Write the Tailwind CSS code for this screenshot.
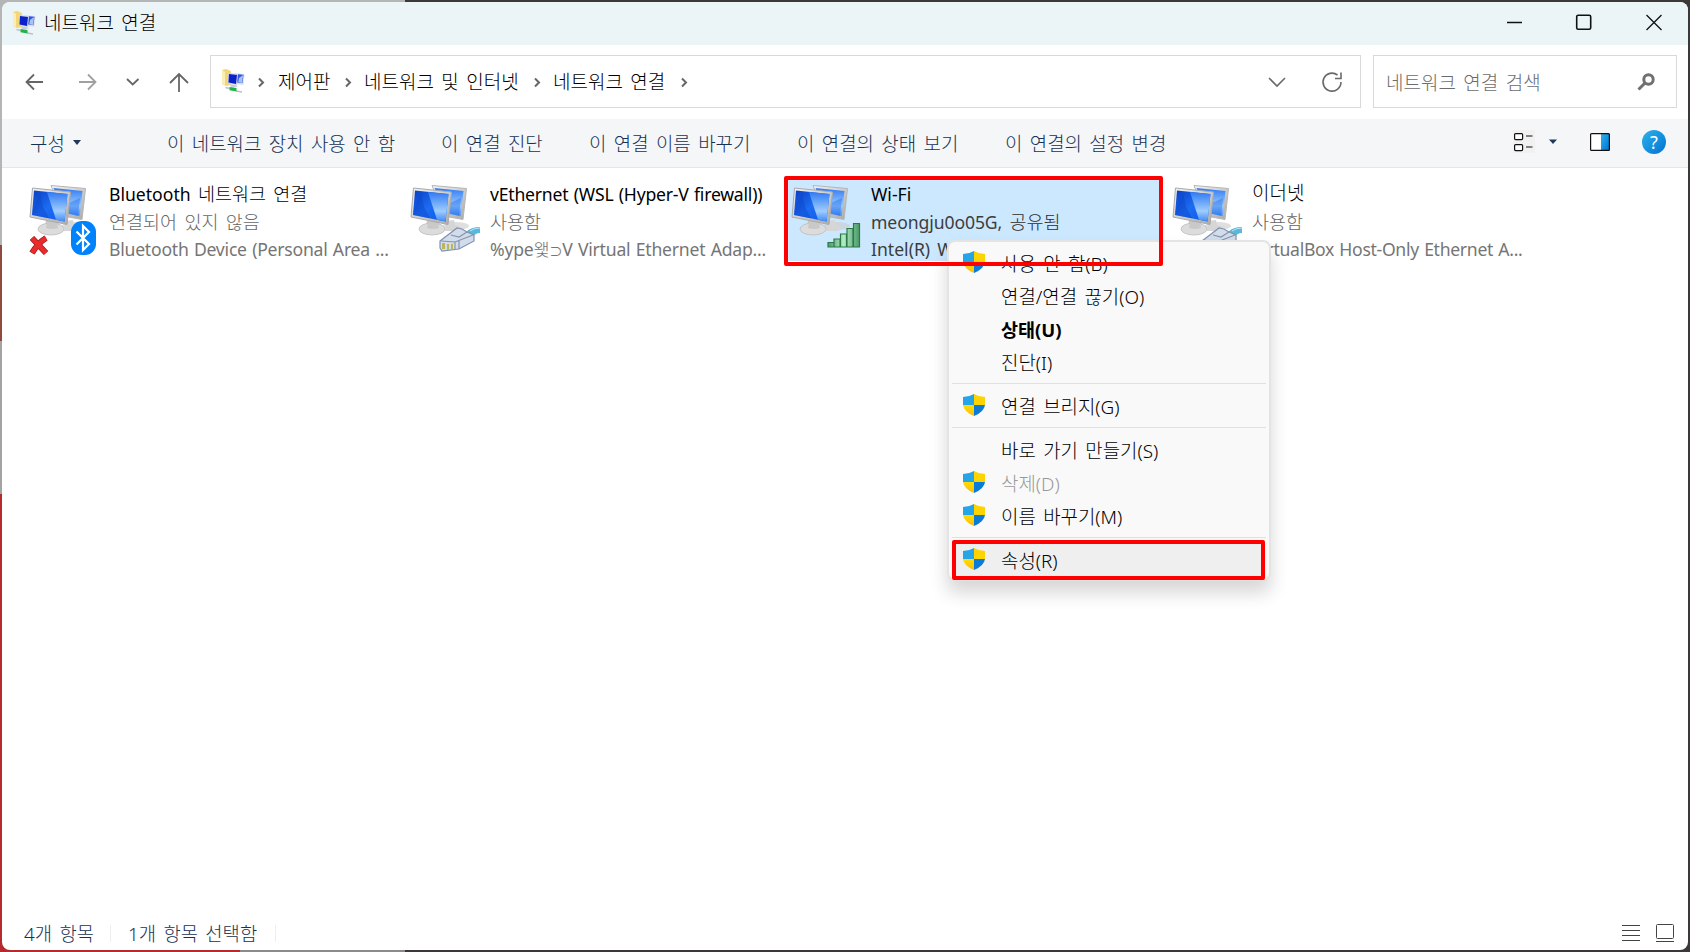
<!DOCTYPE html>
<html lang="ko">
<head>
<meta charset="utf-8">
<title>네트워크 연결</title>
<script src="https://cdn.jsdelivr.net/npm/@tailwindcss/browser@4"></script>
</head>
<body class="relative h-[952px] w-[1690px] overflow-hidden bg-[#3b3837] p-[2px] font-['Noto_Sans','Noto_Sans_CJK_KR',sans-serif] text-[18px] leading-[27px] font-light text-black [word-spacing:2.5px]">
<!-- desktop behind the window -->
<div class="absolute inset-y-0 left-0 flex w-[405px] flex-col">
  <div class="h-[245px] bg-[#b5b5b6]"></div><div class="h-24 bg-[#8f4a40]"></div><div class="h-[153px] bg-[#a3a3a3]"></div>
  <div class="flex flex-1"><div class="w-60 bg-[#b52a2d]"></div><div class="flex-1 bg-[#8c8a89]"></div></div>
</div>

<svg class="absolute size-0">
  <defs>
    <linearGradient id="scr" x1="0" y1="0" x2="1" y2="1"><stop offset="0" stop-color="#0a3fc4"/><stop offset=".5" stop-color="#1c6cf2"/><stop offset="1" stop-color="#0b57ec"/></linearGradient>
    <linearGradient id="glare" x1="0" y1="0" x2="0" y2="1"><stop offset="0" stop-color="#2f7bf5"/><stop offset=".65" stop-color="#9fccfd"/><stop offset="1" stop-color="#3f8af6"/></linearGradient>
    <linearGradient id="metal" x1="0" y1="0" x2="1" y2="1"><stop offset="0" stop-color="#f4f4f4"/><stop offset="1" stop-color="#a9a9a9"/></linearGradient>
    <linearGradient id="bar" x1="0" y1="0" x2="1" y2="0"><stop offset="0" stop-color="#4a9a68"/><stop offset=".5" stop-color="#b4eac4"/><stop offset="1" stop-color="#4a9a68"/></linearGradient>
    <linearGradient id="yel" x1="0" y1="0" x2="0" y2="1"><stop offset="0" stop-color="#ffdd00"/><stop offset="1" stop-color="#fdbb10"/></linearGradient>
    <linearGradient id="blu" x1="0" y1="0" x2="1" y2="1"><stop offset="0" stop-color="#2db3ec"/><stop offset="1" stop-color="#0072d2"/></linearGradient>
    <symbol id="pc" viewBox="0 0 66 72">
      <ellipse cx="46" cy="41" rx="13" ry="4" fill="#c9c9c9" opacity=".6"/>
      <path d="M36 36l8-1 1 5 6 2-4 4-12 0z" fill="#d6d6d6"/>
      <path d="M22 0.500L56.500 3.500 53 34.500 34 31z" fill="url(#metal)" stroke="#b5b5b5"/>
      <path d="M24.500 3L53.500 6 50.500 31 35 28z" fill="url(#glare)"/>
      <path d="M40 18l11-5-2 18-11-3z" fill="#1767ee" opacity=".4"/>
      <path d="M17 36h12l2 8H15z" fill="#c6c6c6"/>
      <ellipse cx="22" cy="44" rx="13" ry="6" fill="#dcdcdc" stroke="#bdbdbd" stroke-width=".8"/>
      <path d="M18 37h10l1 6q-6 2-12 0z" fill="#c9c9c9"/>
      <path d="M3.500 3L41.500 7 38 39.500 1 32z" fill="url(#metal)" stroke="#aaa"/>
      <path d="M5 5.500L38.500 9 35.500 36.500 3 30z" fill="url(#scr)"/>
      <path d="M18 7L38.500 9 35.500 36.500 27 34.700z" fill="url(#glare)"/>
      <path d="M3.800 24L11 8 14 22 20 33.200 3 30z" fill="#0a43c8" opacity=".4"/>
    </symbol>
    <symbol id="plug" viewBox="0 0 42 26">
      <path d="M27 6Q32 1 41 1v6q-5 0-8 5z" fill="#59b8dc"/><path d="M31 5q4-3 10-3" stroke="#b5e6f5" fill="none"/>
      <path d="M1 15L18 2l5 1 5 3 7 3v6L20 23 3 25 1 22z" fill="#d2dceb" stroke="#7f93b0" stroke-width="1.200"/>
      <path d="M2 15l14 1v8M16 16L34 9M12 9l8 2 8-5M20 15v8" fill="none" stroke="#8496ad" stroke-width="1.200"/>
      <path d="M3 17h3v6h-3zM8 18h2v6h-2zM12 18h2v5h-2z" fill="#bdb659"/>
    </symbol>
    <symbol id="net" viewBox="0 0 24 24">
      <path d="M1 1l4-1 5 2v14l-5 1-4-2z" fill="#f2d678"/><path d="M1 1l3 2v13l-3-1z" fill="#fbeeb5"/>
      <path d="M13 4l10.500 1-1 11-9-1z" fill="#dfe2ee"/><path d="M14.500 5l8 .7-1 8.500-7-1z" fill="#2f55e0"/><path d="M18 9l4-3-.8 8-4-.7z" fill="#a8c2fa"/>
      <path d="M7 4l10 1-1 11-9-2z" fill="#cdd4ea"/><path d="M8 5l8 1-1 9-7.500-1.500z" fill="#0a22c8"/><path d="M9 15l6 1 2 1.500-7 1z" fill="#c9d0d4"/>
      <path d="M4.500 18.500l4 1M15 22l6 1" stroke="#b5c3c9" stroke-width="1.500"/><path d="M8.500 18l7 1v3.500l-7-1.200z" fill="#22b14c"/>
    </symbol>
    <symbol id="shield" viewBox="0 0 22 22">
      <path d="M11 0v11H0V3Q6 3 11 0z" fill="#25a5e8"/><path d="M11 0v11h11V3Q16 3 11 0z" fill="#fdd400"/>
      <path d="M0 11h11v11Q1 18 0 11z" fill="url(#yel)"/><path d="M22 11H11v11q10-4 11-11z" fill="#0b7bd8"/>
    </symbol>
  </defs>
</svg>

<main class="relative flex h-[948px] w-[1686px] flex-col overflow-hidden rounded-lg bg-white">
  <header class="flex h-[43px] shrink-0 items-center bg-[#ebf5f8] pb-[2px] pl-[10px]">
    <svg class="size-6"><use href="#net"/></svg>
    <h1 class="ml-[8px] pt-px text-[19px] leading-[27px] font-light">네트워크 연결</h1>
    <svg class="ml-auto mr-[25px] h-[17px] w-[158px]" viewBox="0 0 158 17" fill="none" stroke="#111" stroke-width="1.300">
      <path d="M2 8.500h15"/><rect x="71.700" y="1.200" width="14" height="14" rx="1.500" stroke-width="1.600"/><path d="M141.500 1l15 15M156.500 1l-15 15"/>
    </svg>
  </header>

  <nav class="flex h-[74px] shrink-0 items-center pb-[1px]">
    <svg class="h-6 w-[208px]" viewBox="0 0 208 24" fill="none" stroke="#666" stroke-width="1.800">
      <path d="M41 12H25M32 4.500L24.500 12l7.500 7.500"/><path stroke="#a0a0a0" d="M77 12h16M86 4.500l7.500 7.500-7.500 7.500"/><path d="M125 9l5.700 5.500L136.500 9"/><path d="M177 22V4.500M168 13l9-9 9 9"/>
    </svg>
    <div class="flex h-[53px] w-[1151px] items-center border border-[#d9d9d9] pl-[10px] text-[19px]">
      <svg class="mb-[2px] size-6"><use href="#net"/></svg>
      <svg class="ml-[13px] h-3 w-[7px]" fill="none" stroke="#666" stroke-width="2"><path d="M1 2.500l4 4-4 4"/></svg>
      <span class="ml-[13px] w-[67px] pt-px whitespace-nowrap">제어판</span>
      <svg class="h-3 w-[7px]" fill="none" stroke="#666" stroke-width="2"><path d="M1 2.500l4 4-4 4"/></svg>
      <span class="ml-[12px] w-[170px] pt-px whitespace-nowrap">네트워크 및 인터넷</span>
      <svg class="h-3 w-[7px]" fill="none" stroke="#666" stroke-width="2"><path d="M1 2.500l4 4-4 4"/></svg>
      <span class="ml-[12px] w-[128px] pt-px whitespace-nowrap">네트워크 연결</span>
      <svg class="h-3 w-[7px]" fill="none" stroke="#666" stroke-width="2"><path d="M1 2.500l4 4-4 4"/></svg>
      <svg class="ml-auto mr-[17px] h-6 w-[75px]" viewBox="0 0 75 24" fill="none" stroke="#6a6a6a" stroke-width="1.600"><path d="M1 8l8 8 8-8"/><path d="M73 12a9 9 0 1 1-3.500-7M73 2.500v6h-6"/></svg>
    </div>
    <div class="ml-[12px] flex h-[53px] w-[304px] items-center border border-[#d9d9d9] pl-[12px] text-[19px] text-[#6c6c6c]">
      <span class="pt-[3px]">네트워크 연결 검색</span>
      <svg class="ml-auto mr-[21px] h-[18px] w-[18px]" fill="none" stroke="#707070" stroke-width="3"><circle cx="11.500" cy="6.500" r="4.700"/><path d="M8 10l-6.500 6.500"/></svg>
    </div>
  </nav>

  <div class="relative flex h-[49px] shrink-0 items-center border-b border-[#e5e6e8] bg-[#f4f6f8] pl-7 text-[18.900px] text-[#173153] *:[span]:pt-[2px]">
    <span class="w-[43px]">구성</span><i class="mb-px h-0 w-0 border-x-4 border-t-[5px] border-x-transparent border-t-[#1e395b]"></i>
    <span class="ml-[86px] w-[274px] whitespace-nowrap">이 네트워크 장치 사용 안 함</span>
    <span class="w-[148px] whitespace-nowrap">이 연결 진단</span>
    <span class="w-[208px] whitespace-nowrap">이 연결 이름 바꾸기</span>
    <span class="w-[208px] whitespace-nowrap">이 연결의 상태 보기</span>
    <span class="whitespace-nowrap">이 연결의 설정 변경</span>
    <svg class="mb-[2px] ml-auto mr-[22px] h-6 w-[153px]" viewBox="0 0 153 24" fill="none">
      <rect x="0" y="0" width="22" height="23" fill="#f1f1f1"/>
      <g stroke="#111" stroke-width="1.200"><rect x="1.600" y="3.600" width="8" height="6" rx="1" fill="#fff"/><rect x="1.600" y="14.600" width="8" height="6" rx="1" fill="#fff"/><path d="M13 6h6.500M13 17h6.500"/></g>
      <path d="M36 9.500h8l-4 4.500z" fill="#1e395b"/>
      <rect x="77.500" y="3.500" width="19" height="17" fill="#fff"/><rect x="88" y="3.500" width="8.500" height="17" fill="url(#blu)"/><rect x="77.600" y="3.600" width="18.800" height="16.800" rx="1" stroke="#111" stroke-width="1.200"/>
      <circle cx="141" cy="12" r="12" fill="url(#blu)"/><text x="141" y="18.500" text-anchor="middle" fill="#fff" font-size="18" class="font-normal">?</text>
    </svg>
  </div>

  <section class="relative grid grow grid-cols-[repeat(4,381px)] content-start pt-[9px] text-[18.500px] leading-[27.500px] text-[#666]">
    <article class="flex h-[90px] pl-[27px] pt-[7px]">
      <div class="relative h-[76px] w-[80px] shrink-0"><svg class="mt-px h-[72px] w-[66px]"><use href="#pc"/></svg>
        <svg class="absolute -left-px top-[50px] h-[22px] w-[22px]" viewBox="0 0 22 22"><path d="M4 4l14 15M18 4Q10 9 4 19" stroke="#9c1a1a" stroke-width="6" fill="none"/><path d="M4 4l14 15M18 4Q10 9 4 19" stroke="#ea2b2b" stroke-width="4.500" fill="none"/></svg>
        <svg class="absolute left-[42px] top-[37px] h-[34px] w-[25px]" viewBox="0 0 25 34"><rect width="25" height="34" rx="11" fill="#0082fc"/><path d="M5.500 10.500L18 23l-6 6V5l6 6L5.500 23.500" fill="none" stroke="#fff" stroke-width="2.200"/></svg>
      </div>
      <div class="-mt-[4px] whitespace-nowrap"><p class="text-black"><span class="text-[17.600px] font-normal">Bluetooth</span> 네트워크 연결</p><p class="-mt-px mb-px">연결되어 있지 않음</p><p class="text-[17.600px] font-normal tracking-[-0.230px] text-[#757575] [word-spacing:1px]">Bluetooth Device (Personal Area ...</p></div>
    </article>
    <article class="flex h-[90px] pl-[27px] pt-[7px]">
      <div class="relative h-[76px] w-[80px] shrink-0"><svg class="mt-px h-[72px] w-[66px]"><use href="#pc"/></svg><svg class="absolute left-[29px] top-[42px] h-[26px] w-[42px]"><use href="#plug"/></svg></div>
      <div class="-mt-[3px] whitespace-nowrap"><p class="text-[17.600px] font-normal tracking-[-0.210px] text-black [word-spacing:1px]">vEthernet (WSL (Hyper-V firewall))</p><p class="-mt-px mb-px">사용함</p><p class="text-[17.600px] font-normal tracking-[-0.220px] text-[#757575] [word-spacing:1px]">%ype<span class="font-light">왳</span><span class="text-[13px]">⊃</span>V Virtual Ethernet Adap...</p></div>
    </article>
    <article class="ml-[22px] flex h-[84px] w-[373px] bg-[#cce8ff] pl-[5px] pt-[7px] text-[#2c2c2c]">
      <div class="relative h-[76px] w-[80px] shrink-0"><svg class="mt-px h-[72px] w-[66px]"><use href="#pc"/></svg>
        <svg class="absolute left-[36px] top-[38px] h-[26px] w-[34px]" viewBox="0 0 34 26" fill="url(#bar)" stroke="#2a7a48" stroke-width="1.200"><path d="M1 20.500h6V25H1zM7 17h6v8H7zM13.500 12h6v13h-6zM20 6.500h6V25h-6zM26.500 1.500h6V25h-6z"/></svg></div>
      <div class="-mt-[3px] whitespace-nowrap"><p class="text-[17.600px] font-normal text-black">Wi-Fi</p><p class="-mt-px"><span class="text-[17.600px] font-normal tracking-[-0.100px] text-[#3c3c3c]">meongju0o05G,</span> 공유됨</p><p class="text-[17.600px] font-normal text-[#3c3c3c]">Intel(R) Wi-Fi</p></div>
    </article>
    <article class="flex h-[90px] pl-[27px] pt-[7px]">
      <div class="relative h-[76px] w-[80px] shrink-0"><svg class="mt-px h-[72px] w-[66px]"><use href="#pc"/></svg><svg class="absolute left-[29px] top-[42px] h-[26px] w-[42px]"><use href="#plug"/></svg></div>
      <div class="-mt-[4px] whitespace-nowrap"><p class="text-[19px] text-black">이더넷</p><p class="mb-px">사용함</p><p class="text-[17.600px] font-normal tracking-[-0.300px] text-[#757575] [word-spacing:1px]">VirtualBox Host-Only Ethernet A...</p></div>
    </article>
  </section>

  <footer class="flex h-[34px] shrink-0 items-center pl-[22px] text-[18.800px] text-[#173153]">
    <span class="w-[86px] pt-[2px]">4개 항목</span><i class="h-[17px] w-px bg-[#eee]"></i><span class="ml-[17px] w-[147px] pt-[2px] whitespace-nowrap">1개 항목 선택함</span><i class="h-[17px] w-px bg-[#eee]"></i>
    <svg class="ml-auto mr-[13px] mb-px h-[19px] w-[53px]" viewBox="0 0 53 19" fill="none" stroke="#444" stroke-width="1"><path d="M0 2.500h18M0 7.500h18M0 12.500h18M0 17.500h18"/><rect x="34.500" y="1.500" width="17" height="14" rx="1"/><path d="M34 18.500h18"/></svg>
  </footer>
</main>

<!-- context menu -->
<div class="absolute left-[947px] top-[240px] flex h-[341px] w-[324px] flex-col rounded-lg border-2 border-[#e4e4e4] bg-[#f9f9f9] px-[3px] pt-[6px] text-[18.900px] leading-[33px] text-black shadow-[0_12px_18px_rgba(0,0,0,0.16)] *:shrink-0">
  <div class="flex h-[33px] pl-[11px]"><svg class="mr-[16px] mt-[3px] size-[22px]"><use href="#shield"/></svg>사용 안 함(B)</div>
  <div class="h-[33px] pl-[49px]">연결/연결 끊기(O)</div>
  <div class="h-[33px] pl-[49px] text-[18.500px] leading-[31px] font-bold">상태(U)</div>
  <div class="h-[33px] pl-[49px]">진단(I)</div>
  <div class="mt-[3px] mb-[6px] h-px bg-[#e0e0e0]"></div>
  <div class="flex h-[33px] pl-[11px] leading-[35px]"><svg class="mr-[16px] mt-[4px] size-[22px]"><use href="#shield"/></svg>연결 브리지(G)</div>
  <div class="mt-[4px] mb-[6px] h-px bg-[#e0e0e0]"></div>
  <div class="h-[33px] pl-[49px] leading-[35px]">바로 가기 만들기(S)</div>
  <div class="flex h-[33px] pl-[11px] leading-[35px] text-[#999]"><svg class="mr-[16px] mt-[4px] size-[22px]"><use href="#shield"/></svg>삭제(D)</div>
  <div class="flex h-[33px] pl-[11px] leading-[35px]"><svg class="mr-[16px] mt-[4px] size-[22px]"><use href="#shield"/></svg>이름 바꾸기(M)</div>
  <div class="mt-[4px] mb-[6px] h-px bg-[#e0e0e0]"></div>
  <div class="flex h-[34px] bg-[#efefef] pl-[11px] leading-[35px]"><svg class="mr-[16px] mt-[4px] size-[22px]"><use href="#shield"/></svg>속성(R)</div>
</div>

<!-- highlight frames -->
<div class="absolute left-[784px] top-[176px] h-[90px] w-[379px] rounded-[2px] border-4 border-[#fe0000]"></div>
<div class="absolute left-[952px] top-[540px] h-[40px] w-[313px] rounded-[2px] border-4 border-[#fe0000]"></div>
</body>
</html>
